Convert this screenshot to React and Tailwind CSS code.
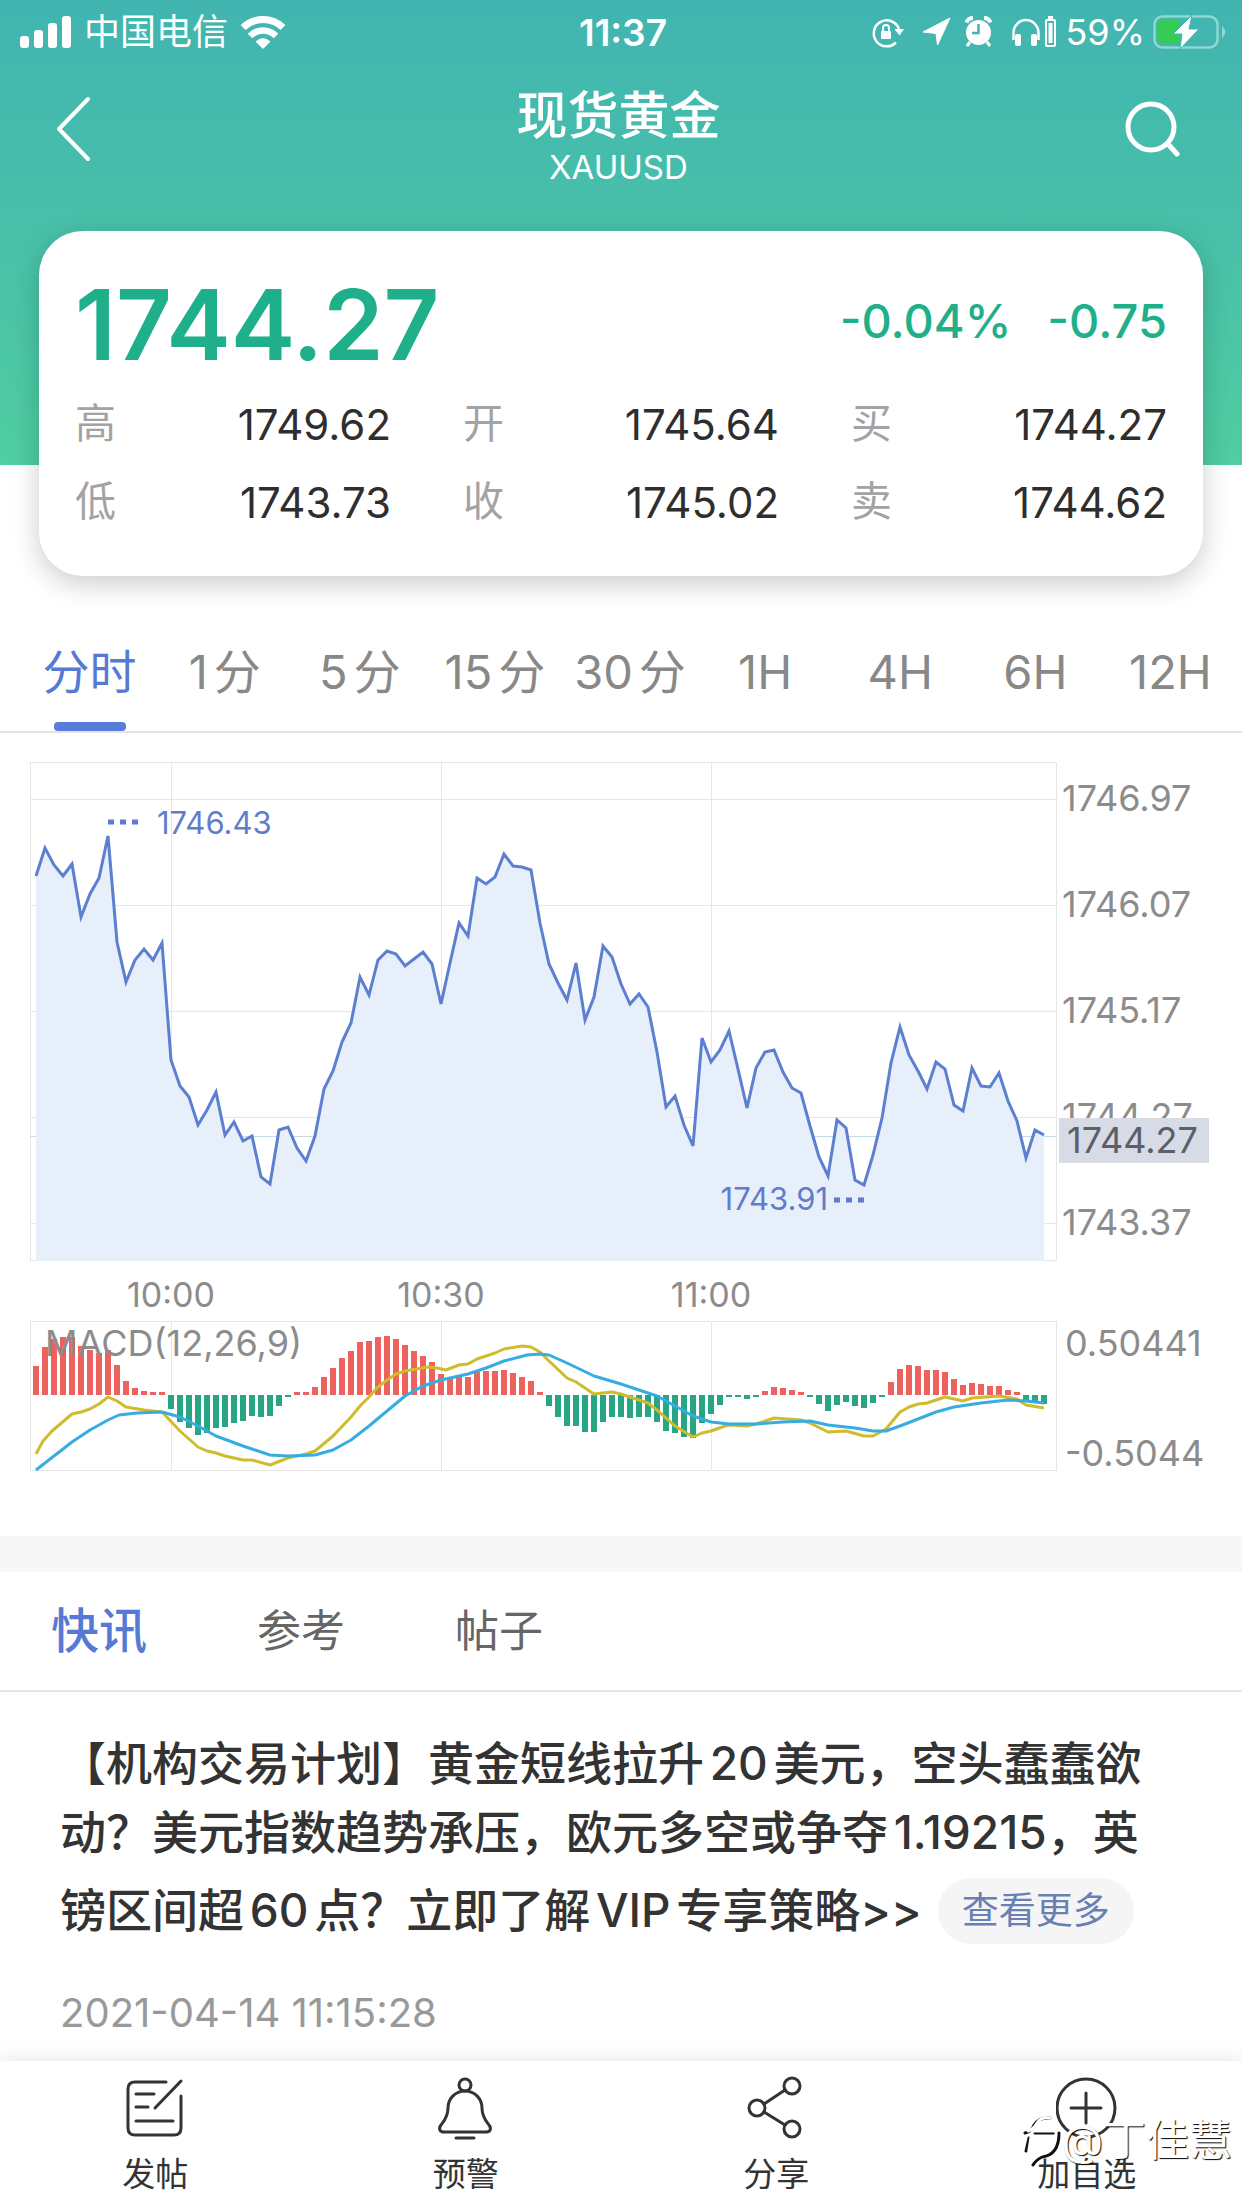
import { useState } from "react";

const quotes = [
  { label: "高", value: "1749.62" },
  { label: "开", value: "1745.64" },
  { label: "买", value: "1744.27" },
  { label: "低", value: "1743.73" },
  { label: "收", value: "1745.02" },
  { label: "卖", value: "1744.62" },
];

const periods = ["分时", "1分", "5分", "15分", "30分", "1H", "4H", "6H", "12H"];
const newsTabs = ["快讯", "参考", "帖子"];

// one point per minute
const STEP = 9;
const START = 36;
const price = [
  876, 848, 865, 876, 864, 917, 894, 878, 836, 942, 982, 960, 949, 960, 943,
  1060, 1086, 1097, 1125, 1110, 1092, 1135, 1122, 1141, 1136, 1177, 1184, 1130,
  1127, 1148, 1161, 1136, 1089, 1071, 1042, 1023, 977, 995, 960, 951, 954, 966,
  959, 952, 964, 1004, 963, 923, 936, 878, 884, 877, 854, 866, 867, 870, 923,
  964, 983, 1000, 963, 1020, 997, 946, 957, 984, 1004, 994, 1007, 1052, 1107,
  1096, 1125, 1146, 1038, 1062, 1050, 1031, 1069, 1108, 1068, 1052, 1050, 1072,
  1088, 1093, 1126, 1157, 1176, 1120, 1128, 1180, 1185, 1155, 1118, 1063, 1027,
  1055, 1071, 1089, 1062, 1069, 1105, 1111, 1068, 1086, 1087, 1073, 1101, 1121,
  1158, 1130, 1135,
];

const histogram = [
  29, 48, 56, 58, 58, 49, 45, 42, 45, 30, 14, 7, 4, 3, 3, -14, -27, -33, -40,
  -38, -33, -32, -28, -26, -21, -22, -21, -11, -2, 3, 3, 8, 18, 27, 37, 44, 53,
  54, 58, 59, 56, 50, 44, 39, 33, 21, 17, 19, 18, 23, 24, 24, 25, 22, 18, 14, 3,
  -11, -22, -31, -31, -37, -37, -27, -22, -22, -23, -22, -22, -27, -36, -38,
  -42, -43, -28, -19, -10, -2, -2, -4, -2, 4, 8, 7, 5, 3, -2, -9, -16, -10, -7,
  -11, -13, -8, -2, 13, 26, 30, 29, 25, 25, 23, 16, 10, 12, 11, 9, 9, 5, 3, -7,
  -8, -9,
];

const dif =
  "36,1454 43,1441 52,1431 72,1414 81,1412 90,1409 99,1404 108,1397 117,1401 126,1407 144,1410 162,1412 180,1431 198,1447 207,1451 216,1453 225,1456 234,1458 243,1460 252,1460 270,1465 288,1458 306,1454 315,1451 333,1436 351,1417 360,1406 369,1397 378,1387 387,1380 396,1374 405,1371 428,1367 437,1368 446,1370 459,1365 468,1364 477,1359 486,1356 495,1353 504,1349 522,1346 531,1347 540,1352 549,1361 567,1378 576,1382 585,1388 594,1394 612,1392 621,1394 639,1400 648,1403 657,1410 675,1426 693,1437 702,1433 711,1431 728,1425 747,1426 756,1424 774,1418 801,1420 810,1423 828,1432 846,1431 864,1436 873,1436 886,1429 900,1412 909,1407 918,1404 927,1403 945,1397 963,1401 972,1398 999,1396 1017,1399 1026,1405 1044,1408";
const dea =
  "36,1470 54,1456 72,1442 90,1430 108,1420 119,1415 137,1413 162,1412 180,1417 198,1426 216,1436 243,1446 270,1455 288,1456 315,1455 333,1450 351,1440 369,1426 387,1411 405,1396 423,1386 441,1380 468,1374 486,1368 504,1361 527,1355 540,1354 549,1355 567,1363 594,1376 621,1384 639,1390 657,1396 675,1406 693,1416 711,1422 729,1424 756,1424 783,1422 810,1421 828,1425 855,1428 873,1431 886,1431 900,1426 918,1419 936,1412 954,1407 981,1403 1008,1400 1026,1401 1044,1403";

const priceAxis = [
  { y: 799, label: "1746.97" },
  { y: 905, label: "1746.07" },
  { y: 1011, label: "1745.17" },
  { y: 1117, label: "1744.27" },
  { y: 1223, label: "1743.37" },
];
const timeAxis = [
  { x: 171, label: "10:00" },
  { x: 441, label: "10:30" },
  { x: 711, label: "11:00" },
];

function StatusBar() {
  return (
    <div className="grid h-16 grid-cols-[1fr_auto_1fr] items-center pl-5 pr-4">
      <div className="flex items-center gap-3">
        <svg width="52" height="32" viewBox="0 0 52 32" fill="currentColor">
          <rect x="0" y="20" width="9" height="12" rx="3" />
          <rect x="14" y="14" width="9" height="18" rx="3" />
          <rect x="28" y="7" width="9" height="25" rx="3" />
          <rect x="42" y="0" width="9" height="32" rx="3" />
        </svg>
        <span className="text-[36px] leading-none">中国电信</span>
        <svg width="46" height="34" viewBox="0 0 46 34" fill="none" stroke="currentColor">
          <path d="M3 12.500A29 29 0 0 1 43 12.500" strokeWidth="7" />
          <path d="M10 21A18 18 0 0 1 36 21" strokeWidth="6.500" />
          <path d="M23 34L15.500 26.500Q23 19.500 30.500 26.500Z" fill="currentColor" stroke="none" />
        </svg>
      </div>
      <div className="text-[37px] font-semibold leading-none">11:37</div>
      <div className="flex items-center justify-end">
        <svg width="186" height="36" viewBox="0 0 186 36" fill="none" stroke="currentColor">
          {/* rotation lock */}
          <path d="M25 28.500A13 13 0 1 1 28 15" strokeWidth="2.500" />
          <path d="M23.500 15H33L28.500 21.500Z" fill="currentColor" stroke="none" />
          <rect x="10" y="17" width="10" height="8" rx="1" fill="currentColor" stroke="none" />
          <path d="M12 17V14A3 3 0 0 1 18 14V17" strokeWidth="2" />
          {/* location */}
          <path d="M79 4L52 18L65 19.500L66.500 31Z" fill="currentColor" strokeLinejoin="round" />
          {/* alarm */}
          <circle cx="107.500" cy="18.500" r="12.500" fill="currentColor" stroke="none" />
          <path d="M95.500 8.500A7 7 0 0 1 102 4M119.500 8.500A7 7 0 0 0 113 4" strokeWidth="4" />
          <path d="M99 28L96 32M116 28L119 32" strokeWidth="3" />
          <path d="M107.500 10V19H101" stroke="#41b5b0" strokeWidth="2.500" />
          {/* headphones */}
          <path d="M142.500 26V19A12.500 13 0 0 1 167.500 19V26" strokeWidth="2.500" />
          <rect x="144" y="20" width="6" height="12" rx="2" fill="currentColor" stroke="none" />
          <rect x="160" y="20" width="6" height="12" rx="2" fill="currentColor" stroke="none" />
          <rect x="175" y="6" width="9" height="26" rx="1" strokeWidth="2" />
          <path d="M177.500 9H181.500V29H177.500Z" fill="currentColor" stroke="none" />
          <path d="M177 3.500H182" strokeWidth="3" />
        </svg>
        <span className="mx-2 text-[36px] leading-none">59%</span>
        <svg width="73" height="36" viewBox="0 0 73 36" fill="none">
          <rect x="1.500" y="2.500" width="63" height="31" rx="8" stroke="#8fd8d4" strokeWidth="2.500" />
          <path d="M9 6H27V30H9Q5 30 5 26V10Q5 6 9 6Z" fill="#35cb55" />
          <path d="M69 12Q76 18 69 24Z" fill="#8fd8d4" />
          <path d="M39 1L20 20H29L27 35L46 15H36Z" fill="#fff" stroke="#41b5b0" strokeWidth="1" />
        </svg>
      </div>
    </div>
  );
}

function Header() {
  return (
    <header className="h-[465px] bg-linear-to-b from-[#41b4b0] to-[#50cda1] text-white">
      <StatusBar />
      <div className="flex h-[130px] items-center justify-between pl-14 pr-[61px]">
        <button type="button" aria-label="返回">
          <svg width="36" height="66" viewBox="0 0 36 66" fill="none" stroke="currentColor" strokeWidth="4" strokeLinecap="round" strokeLinejoin="round">
            <path d="M32 3L3 33L32 63" />
          </svg>
        </button>
        <div className="flex flex-col items-center pl-5 pt-[18px]">
          <h1 className="text-[51px] font-medium leading-[58px]">现货黄金</h1>
          <p className="text-[33px] leading-[44px]">XAUUSD</p>
        </div>
        <button type="button" aria-label="搜索">
          <svg width="56" height="56" viewBox="0 0 56 56" fill="none" stroke="currentColor" strokeWidth="5" strokeLinecap="round">
            <circle cx="26" cy="26" r="23" />
            <path d="M43 43L52 53" />
          </svg>
        </button>
      </div>
    </header>
  );
}

function QuoteCard() {
  return (
    <section className="relative mx-[39px] -mt-[234px] rounded-[44px] bg-white px-9 pb-[35px] pt-[33px] shadow-[0_8px_28px_rgba(0,0,0,0.2)]">
      <div className="flex h-[121px] items-center justify-between text-[#1faf8b]">
        <span className="text-[97px] font-semibold leading-none">1744.27</span>
        <span className="flex gap-9 pb-1.5 text-[47px] font-medium">
          <span>-0.04%</span>
          <span>-0.75</span>
        </span>
      </div>
      <dl className="grid grid-cols-3 gap-x-[72px]">
        {quotes.map((q) => (
          <div key={q.label} className="flex h-[78px] items-center justify-between">
            <dt className="text-[41px] text-[#a3a3a3]">{q.label}</dt>
            <dd className="text-[42px] text-[#2e2e2e]">{q.value}</dd>
          </div>
        ))}
      </dl>
    </section>
  );
}

function Chart() {
  const points = price.map((y, i) => `${START + i * STEP},${y}`).join(" ");
  const end = START + (price.length - 1) * STEP;

  return (
    <svg viewBox="0 733 1242 803" className="block w-full" role="img" aria-label="XAUUSD 分时图">
      {/* grid */}
      <g stroke="#e6e6e6" fill="none">
        <rect x="30.500" y="762.500" width="1026" height="498" />
        <rect x="30.500" y="1321.500" width="1026" height="149" />
        {priceAxis.map((p) => (
          <path key={p.y} d={`M31 ${p.y}.5H1056`} />
        ))}
        {timeAxis.map((t) => (
          <path key={t.x} d={`M${t.x}.5 763V1261M${t.x}.5 1322V1471`} />
        ))}
      </g>
      <path d="M31 1136.500H1056" stroke="#c3d9e8" />

      {/* price */}
      <polygon points={`${START},1261 ${points} ${end},1261`} fill="#e7effb" />
      <polyline points={points} fill="none" stroke="#5d7fd0" strokeWidth="3" />
      <g stroke="#6079cf" strokeWidth="5" strokeDasharray="6 6">
        <path d="M108 822H139" />
        <path d="M834 1200H865" />
      </g>
      <g fill="#5f7dca" fontSize="31">
        <text x="157" y="834">1746.43</text>
        <text x="828" y="1210" textAnchor="end">1743.91</text>
      </g>

      {/* MACD */}
      {histogram.map((h, i) => (
        <rect
          key={i}
          x={START + i * STEP - 3}
          y={h > 0 ? 1395 - h : 1395}
          width="6"
          height={Math.abs(h)}
          fill={h > 0 ? "#ee625d" : "#27a585"}
        />
      ))}
      <polyline points={dif} fill="none" stroke="#d0bb2c" strokeWidth="3" strokeLinejoin="round" />
      <polyline points={dea} fill="none" stroke="#37ace0" strokeWidth="3" strokeLinejoin="round" />

      {/* axis labels */}
      <g fill="#8c8c8c" fontSize="36">
        {priceAxis.map((p) => (
          <text key={p.label} x="1062" y={p.y + 12}>{p.label}</text>
        ))}
        <text x="1065" y="1356">0.50441</text>
        <text x="1065" y="1466">-0.5044</text>
        <text x="45" y="1356">MACD(12,26,9)</text>
      </g>
      <g fill="#8c8c8c" fontSize="34" textAnchor="middle">
        {timeAxis.map((t) => (
          <text key={t.label} x={t.x} y="1307">{t.label}</text>
        ))}
      </g>
      <rect x="1059" y="1118" width="150" height="45" fill="#d6dbe6" />
      <text x="1067" y="1153" fontSize="36" fill="#5c5f66">1744.27</text>
    </svg>
  );
}

function News() {
  const [tab, setTab] = useState("快讯");

  return (
    <section className="flex-1 border-t-[36px] border-[#f7f7f7]">
      <div className="flex h-[120px] items-center gap-[110px] border-b-2 border-[#e6e6e6] pl-[51px]">
        {newsTabs.map((name) => (
          <button
            key={name}
            type="button"
            onClick={() => setTab(name)}
            className={
              tab === name
                ? "text-[48px] font-medium text-[#5679d6]"
                : "text-[44px] text-[#666]"
            }
          >
            {name}
          </button>
        ))}
      </div>
      <article className="px-[60px] pt-[37px]">
        <h2 className="text-[46px] font-medium leading-[69px] text-[#333] [text-autospace:normal]">
          【机构交易计划】黄金短线拉升20美元，空头蠢蠢欲
          <br />
          动？美元指数趋势承压，欧元多空或争夺1.19215，英
          <br />
          <span className="flex h-[87px] items-center">
            镑区间超60点？立即了解VIP专享策略&gt;&gt;
            <a href="#more" className="ml-4 rounded-full bg-[#f5f5f6] px-6 text-[37px] font-normal leading-[66px] text-[#6a80b3]">
              查看更多
            </a>
          </span>
        </h2>
        <time className="mt-[31px] block text-[40px] leading-[56px] text-[#999]">2021-04-14 11:15:28</time>
      </article>
    </section>
  );
}

function PostIcon() {
  return (
    <>
      <path d="M42 6H11Q4 6 4 13V52Q4 59 11 59H50Q57 59 57 52V20" />
      <path d="M57 5L31 32M12 18H30M12 31H24M12 45H49" />
    </>
  );
}

function BellIcon() {
  return (
    <>
      <circle cx="30" cy="9" r="6" />
      <path d="M30 15C20 15 13 23 13 32C13 41 9 45 6 49C3 53 5 56 9 56H51C55 56 57 53 54 49C51 45 47 41 47 32C47 23 40 15 30 15Z" />
      <path d="M21 62H39" />
    </>
  );
}

function ShareIcon() {
  return (
    <>
      <circle cx="12" cy="32" r="8" />
      <circle cx="47" cy="10" r="8" />
      <circle cx="47" cy="53" r="8" />
      <path d="M19 28L40 14M19 36L40 49" />
    </>
  );
}

function AddIcon() {
  return (
    <>
      <circle cx="30" cy="32" r="29" />
      <path d="M30 17V47M15 32H45" />
    </>
  );
}

const actions = [
  { label: "发帖", icon: <PostIcon /> },
  { label: "预警", icon: <BellIcon /> },
  { label: "分享", icon: <ShareIcon /> },
  { label: "加自选", icon: <AddIcon /> },
];

function BottomBar() {
  return (
    <nav className="relative grid h-[147px] grid-cols-4 bg-white shadow-[0_-4px_16px_rgba(0,0,0,0.08)]">
      {actions.map((a) => (
        <button key={a.label} type="button" className="flex flex-col items-center pt-[15px] text-[#333]">
          <svg width="62" height="66" viewBox="0 0 62 66" fill="none" stroke="currentColor" strokeWidth="3" strokeLinecap="round" strokeLinejoin="round">
            {a.icon}
          </svg>
          <span className="mt-2 text-[33px] leading-[48px]">{a.label}</span>
        </button>
      ))}
      {/* author mark */}
      <div className="absolute right-2.5 top-[52px] flex items-center text-white">
        <svg width="38" height="54" viewBox="0 0 38 54" fill="none" strokeLinecap="round" strokeWidth="3">
          <path d="M2 20Q8 19 11 12Q16 4 27 5M12 20H33M6 25L3 38M36 20Q36 42 19 44Q13 47 10 52" stroke="#111" />
          <path d="M5 18Q11 16 14 10Q18 4 27 5M10 18H33M8 24L6 37M33 20Q32 38 16 42" stroke="#fff" />
        </svg>
        <span className="text-[43px] leading-[50px] [text-shadow:1px_1px_1px_#000]">@丁佳慧</span>
      </div>
    </nav>
  );
}

function App() {
  const [period, setPeriod] = useState("分时");

  return (
    <div className="flex min-h-screen flex-col bg-white font-['Inter','Noto_Sans_CJK_SC',sans-serif]">
      <Header />
      <QuoteCard />
      <div className="mt-[37px] flex h-[120px] border-b-2 border-[#e3e3e3] pl-[22px] pr-1">
        {periods.map((p) => (
          <button
            key={p}
            type="button"
            onClick={() => setPeriod(p)}
            className={`flex flex-1 basis-0 flex-col items-center pt-[25px] text-[47px] leading-[68px] whitespace-nowrap [text-autospace:normal] ${
              period === p ? "text-[#5679d6]" : "text-[#888]"
            }`}
          >
            {p}
            {period === p && <span className="mt-auto h-[9px] w-[72px] rounded-sm bg-[#587cdb]" />}
          </button>
        ))}
      </div>
      <Chart />
      <News />
      <BottomBar />
    </div>
  );
}

export default App;
